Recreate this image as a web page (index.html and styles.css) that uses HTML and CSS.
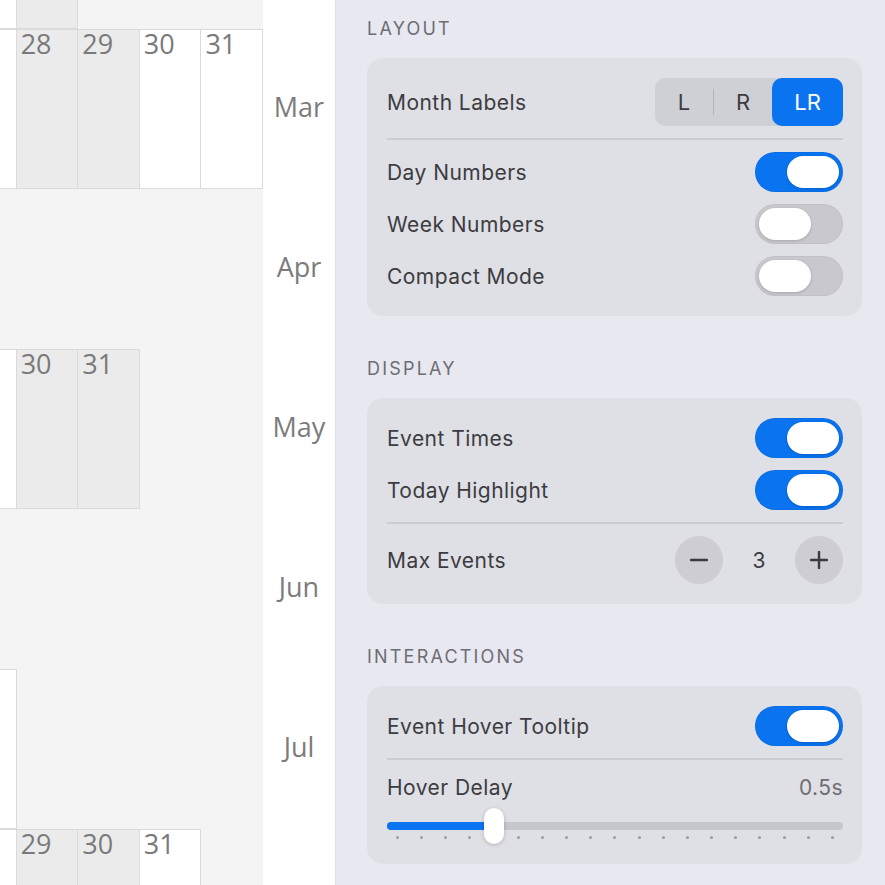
FILE: index.html
```html
<!DOCTYPE html>
<html lang="en">
<head>
<meta charset="utf-8">
<title>Calendar Settings</title>
<link rel="stylesheet" href="styles.css">
</head>
<body>
<div class="app">
  <div class="calendar">
    <div class="months">
      <div class="month">
        <div class="days">
          <div class="cell part"></div>
          <div class="cell we"></div>
          <div class="slot"></div><div class="slot"></div><div class="slot"></div>
        </div>
        <div class="mlabel"></div>
      </div>
      <div class="month">
        <div class="days">
          <div class="cell part"></div>
          <div class="cell we"><span class="num">28</span></div>
          <div class="cell we"><span class="num">29</span></div>
          <div class="cell"><span class="num">30</span></div>
          <div class="cell"><span class="num">31</span></div>
        </div>
        <div class="mlabel">Mar</div>
      </div>
      <div class="month">
        <div class="days">
          <div class="slot part"></div><div class="slot"></div><div class="slot"></div><div class="slot"></div><div class="slot"></div>
        </div>
        <div class="mlabel">Apr</div>
      </div>
      <div class="month">
        <div class="days">
          <div class="cell part"></div>
          <div class="cell we"><span class="num">30</span></div>
          <div class="cell we"><span class="num">31</span></div>
          <div class="slot"></div><div class="slot"></div>
        </div>
        <div class="mlabel">May</div>
      </div>
      <div class="month">
        <div class="days">
          <div class="slot part"></div><div class="slot"></div><div class="slot"></div><div class="slot"></div><div class="slot"></div>
        </div>
        <div class="mlabel">Jun</div>
      </div>
      <div class="month">
        <div class="days">
          <div class="cell part"></div>
          <div class="slot"></div><div class="slot"></div><div class="slot"></div><div class="slot"></div>
        </div>
        <div class="mlabel">Jul</div>
      </div>
      <div class="month">
        <div class="days">
          <div class="cell part"></div>
          <div class="cell we"><span class="num">29</span></div>
          <div class="cell we"><span class="num">30</span></div>
          <div class="cell"><span class="num">31</span></div>
          <div class="slot"></div>
        </div>
        <div class="mlabel"></div>
      </div>
    </div>
  </div>

  <div class="panel">
    <section class="section">
      <h2 class="sec-title">Layout</h2>
      <div class="card">
        <div class="row">
          <span class="label">Month Labels</span>
          <div class="segmented">
            <span class="seg seg-l">L</span>
            <span class="seg-div"></span>
            <span class="seg seg-r">R</span>
            <span class="seg seg-lr active">LR</span>
          </div>
        </div>
        <div class="sep"></div>
        <div class="row">
          <span class="label">Day Numbers</span>
          <div class="toggle on"><span class="knob"></span></div>
        </div>
        <div class="row">
          <span class="label">Week Numbers</span>
          <div class="toggle"><span class="knob"></span></div>
        </div>
        <div class="row">
          <span class="label">Compact Mode</span>
          <div class="toggle"><span class="knob"></span></div>
        </div>
      </div>
    </section>

    <section class="section">
      <h2 class="sec-title">Display</h2>
      <div class="card">
        <div class="row">
          <span class="label">Event Times</span>
          <div class="toggle on"><span class="knob"></span></div>
        </div>
        <div class="row">
          <span class="label">Today Highlight</span>
          <div class="toggle on"><span class="knob"></span></div>
        </div>
        <div class="sep"></div>
        <div class="row">
          <span class="label">Max Events</span>
          <div class="stepper">
            <span class="step-btn">
              <svg width="18" height="18" viewBox="0 0 18 18"><line x1="1" y1="9" x2="17" y2="9" stroke="#3a3a3e" stroke-width="2.4" stroke-linecap="round"/></svg>
            </span>
            <span class="step-val">3</span>
            <span class="step-btn">
              <svg width="18" height="18" viewBox="0 0 18 18"><line x1="1" y1="9" x2="17" y2="9" stroke="#3a3a3e" stroke-width="2.4" stroke-linecap="round"/><line x1="9" y1="1" x2="9" y2="17" stroke="#3a3a3e" stroke-width="2.4" stroke-linecap="round"/></svg>
            </span>
          </div>
        </div>
      </div>
    </section>

    <section class="section">
      <h2 class="sec-title">Interactions</h2>
      <div class="card">
        <div class="row">
          <span class="label">Event Hover Tooltip</span>
          <div class="toggle on"><span class="knob"></span></div>
        </div>
        <div class="sep"></div>
        <div class="slider-group">
          <div class="slider-head">
            <span class="label">Hover Delay</span>
            <span class="value">0.5s</span>
          </div>
          <div class="slider">
            <div class="track"><div class="fill" style="width:107px"></div></div>
            <div class="ticks">
              <i></i><i></i><i></i><i></i><i></i><i></i><i></i><i></i><i></i><i></i><i></i><i></i><i></i><i></i><i></i><i></i><i></i><i></i><i></i>
            </div>
            <div class="thumb" style="left:97px"></div>
          </div>
        </div>
      </div>
    </section>
  </div>
</div>
</body>
</html>
```

FILE: styles.css
```css
* { box-sizing: border-box; }

html, body {
  margin: 0;
  padding: 0;
}

body {
  width: 885px;
  height: 885px;
  overflow: hidden;
  background: #ffffff;
}

.app {
  display: flex;
  width: 885px;
  height: 885px;
}

/* ---------- calendar ---------- */
.calendar {
  width: 335px;
  flex: 0 0 335px;
  overflow: hidden;
  background: #ffffff;
}

.months {
  margin-top: -131px; /* scroll position */
  display: flex;
  flex-direction: column;
}

.month {
  display: flex;
  height: 160px;
}

.days {
  flex: 0 0 263px;
  width: 263px;
  display: flex;
  justify-content: flex-end;
  background: #f4f4f4;
}

.cell, .slot {
  flex: 0 0 62.6px;
  width: 62.6px;
  height: 160px;
  margin-left: -1px;
}

/* column cut by the horizontal scroll edge */
.cell.part, .slot.part {
  flex: 1 1 auto;
  width: auto;
  margin-left: 0;
}

.cell {
  background: #ffffff;
  border: 1px solid #dadada;
  padding: 0 0 0 4px;
}

.cell.part {
  border-left: 0;
}

.cell.we {
  background: #ebebeb;
}

.num {
  display: block;
  font-family: "Open Sans", Lato, sans-serif;
  font-size: 27px;
  line-height: 1;
  color: #7a7a7a;
}

.mlabel {
  flex: 0 0 72px;
  width: 72px;
  display: flex;
  align-items: center;
  justify-content: center;
  padding-bottom: 5px;
  font-family: "Open Sans", Lato, sans-serif;
  font-size: 27px;
  color: #7c7c7c;
  background: #ffffff;
}

/* ---------- panel ---------- */
.panel {
  flex: 1;
  background: #e8e8f0;
  border-left: 1px solid #dfdfe7;
  padding: 19px 23px 0 31px;
  display: flex;
  flex-direction: column;
  gap: 43px;
  font-family: Inter, "Noto Sans", sans-serif;
}

.section {
  display: flex;
  flex-direction: column;
}

.sec-title {
  margin: 0 0 19px 0;
  font-size: 18px;
  line-height: 20px;
  font-weight: 400;
  letter-spacing: 2.2px;
  text-transform: uppercase;
  color: #6d6d73;
}

.card {
  background: #dfdfe6;
  border-radius: 16px;
  padding: 20px 19px 20px 20px;
  display: flex;
  flex-direction: column;
  gap: 12px;
}

.row {
  display: flex;
  align-items: center;
  justify-content: space-between;
}

.label {
  font-size: 21px;
  letter-spacing: 0.45px;
  color: #3c3c40;
}

.sep {
  height: 2px;
  background: #cbcbd2;
}

/* segmented */
.segmented {
  display: flex;
  align-items: center;
  height: 48px;
  border-radius: 10px;
  background: #cfcfd6;
}

.seg {
  height: 48px;
  display: flex;
  align-items: center;
  justify-content: center;
  font-size: 22px;
  color: #3c3c40;
}

.seg-l { width: 58px; }
.seg-r { width: 58px; }
.seg-lr { width: 71px; }

.seg.active {
  background: #0a73f0;
  color: #ffffff;
  border-radius: 10px;
}

.seg-div {
  width: 1px;
  height: 26px;
  background: #b4b4bb;
}

/* toggle */
.toggle {
  width: 88px;
  height: 40px;
  border-radius: 20px;
  padding: 4px;
  display: flex;
  justify-content: flex-start;
  background: #c8c8ce;
  box-shadow: inset 0 0 0 1px rgba(0, 0, 0, 0.04);
}

.toggle.on {
  justify-content: flex-end;
  background: #0a73f0;
}

.knob {
  width: 52px;
  height: 32px;
  border-radius: 16px;
  background: #ffffff;
  box-shadow: 0 1px 3px rgba(0, 0, 0, 0.18);
}

/* stepper */
.stepper {
  display: flex;
  align-items: center;
}

.step-btn {
  width: 48px;
  height: 48px;
  border-radius: 50%;
  background: #cdcdd3;
  display: flex;
  align-items: center;
  justify-content: center;
}

.step-btn svg { display: block; }

.step-val {
  width: 72px;
  text-align: center;
  font-size: 21px;
  color: #3c3c40;
}

/* slider */
.slider-group {
  display: flex;
  flex-direction: column;
}

.slider-head {
  height: 30px;
  display: flex;
  align-items: center;
  justify-content: space-between;
  margin-bottom: 6px;
}

.value {
  font-size: 21px;
  letter-spacing: 0.45px;
  color: #6d6d73;
}

.slider {
  position: relative;
  height: 36px;
}

.track {
  position: absolute;
  left: 0;
  right: 0;
  top: 14px;
  height: 8px;
  border-radius: 4px;
  background: #c6c6cd;
  overflow: hidden;
}

.fill {
  height: 100%;
  background: #0a73f0;
}

.ticks {
  position: absolute;
  left: 9px;
  right: 9px;
  top: 28px;
  display: flex;
  justify-content: space-between;
}

.ticks i {
  display: block;
  width: 3px;
  height: 3px;
  border-radius: 50%;
  background: #9c9ca3;
}

.thumb {
  position: absolute;
  top: 0;
  width: 20px;
  height: 36px;
  border-radius: 10px;
  background: #ffffff;
  box-shadow: 0 1px 4px rgba(0, 0, 0, 0.2);
}
```
